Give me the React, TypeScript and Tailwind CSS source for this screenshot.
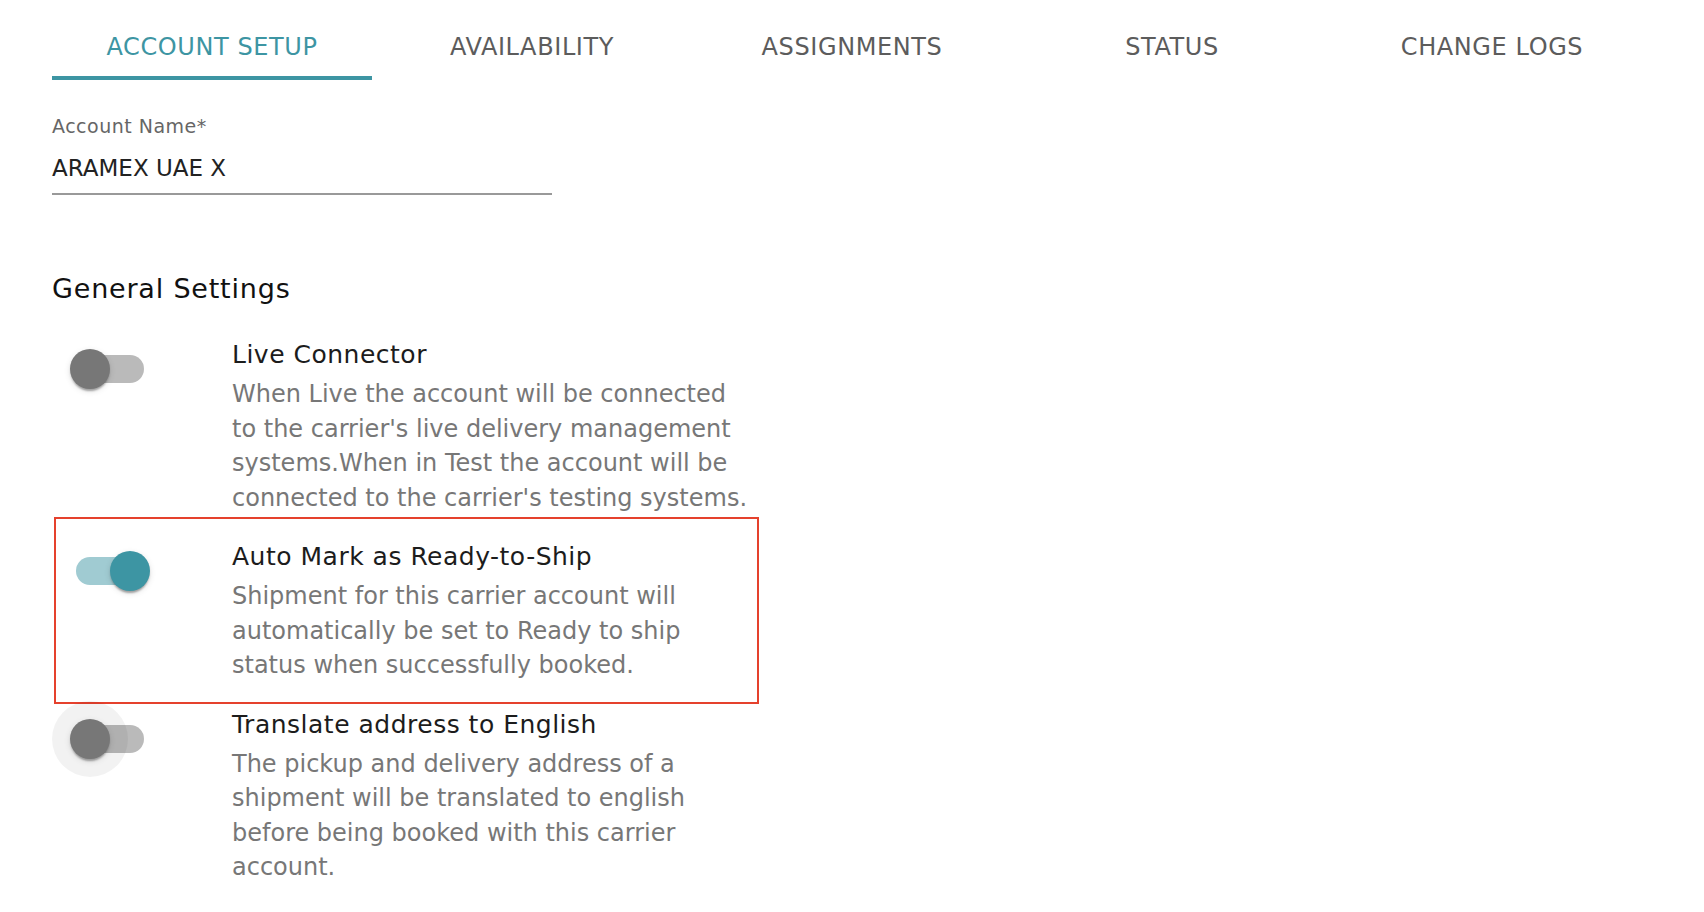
import React from "react";

const tabs = ["ACCOUNT SETUP", "AVAILABILITY", "ASSIGNMENTS", "STATUS", "CHANGE LOGS"];

const settings = [
  {
    title: "Live Connector",
    desc: "When Live the account will be connected to the carrier's live delivery management systems.When in Test the account will be connected to the carrier's testing systems.",
    on: false,
  },
  {
    title: "Auto Mark as Ready-to-Ship",
    desc: "Shipment for this carrier account will automatically be set to Ready to ship status when successfully booked.",
    on: true,
    highlight: true,
  },
  {
    title: "Translate address to English",
    desc: "The pickup and delivery address of a shipment will be translated to english before being booked with this carrier account.",
    on: false,
    focus: true,
  },
];

function Toggle({ on, focus }: { on?: boolean; focus?: boolean }) {
  return (
    <div className="relative h-[76px] w-[116px] shrink-0">
      <div
        className={`absolute left-[24px] top-[24px] h-[28px] w-[68px] rounded-[14px] ${
          on ? "bg-[#a0cbd2]" : "bg-[#bababa]"
        }`}
      />
      <div
        className={`absolute top-0 flex h-[76px] w-[76px] items-center justify-center rounded-full ${
          on ? "left-[40px]" : "left-0"
        } ${focus ? "bg-black/[0.05]" : ""}`}
      >
        <div
          className={`h-[40px] w-[40px] rounded-full shadow-[0_4px_2px_-2px_rgba(0,0,0,0.2),0_2px_2px_0_rgba(0,0,0,0.14),0_2px_6px_0_rgba(0,0,0,0.12)] ${
            on ? "bg-[#3d95a3]" : "bg-[#777777]"
          }`}
        />
      </div>
    </div>
  );
}

export default function App() {
  return (
    <div className="min-h-screen bg-white px-[52px] font-['DejaVu_Sans',sans-serif]">
      {/* Tabs */}
      <div className="grid grid-cols-5">
        {tabs.map((t, i) => (
          <div
            key={t}
            className={`pt-[30px] pb-[12px] text-center text-[24px] leading-[34px] tracking-[0.6px] border-b-4 ${
              i === 0 ? "text-[#3d95a3] border-[#3d95a3]" : "text-[#5c5c5c] border-transparent"
            }`}
          >
            {t}
          </div>
        ))}
      </div>

      {/* Account name field */}
      <div className="mt-[34px] w-[500px] border-b-2 border-[#999999] pb-[8px]">
        <div className="text-[19px] leading-[24px] tracking-[0.5px] text-[#666666]">Account Name*</div>
        <div className="mt-[13px] text-[23px] leading-[34px] text-[#222222]">ARAMEX UAE X</div>
      </div>

      <h2 className="mt-[76px] text-[27px] leading-[36px] tracking-[0.8px] text-[#111111]">General Settings</h2>

      <div className="mt-[24px] flex flex-col gap-[18px]">
        {settings.map((s) => (
          <div key={s.title} className="relative flex items-start">
            {s.highlight && (
              <div className="pointer-events-none absolute left-[2px] top-[-16px] h-[187px] w-[705px] border-2 border-[#e5412d]" />
            )}
            <div className="w-[180px] shrink-0">
              <Toggle on={s.on} focus={s.focus} />
            </div>
            <div className="w-[520px] pt-[7px]">
              <div className="text-[25px] leading-[34px] tracking-[0.5px] text-[#1c1c1c]">{s.title}</div>
              <p className="mt-[5px] text-[24px] leading-[34.5px] text-[#777777]">{s.desc}</p>
            </div>
          </div>
        ))}
      </div>
    </div>
  );
}
